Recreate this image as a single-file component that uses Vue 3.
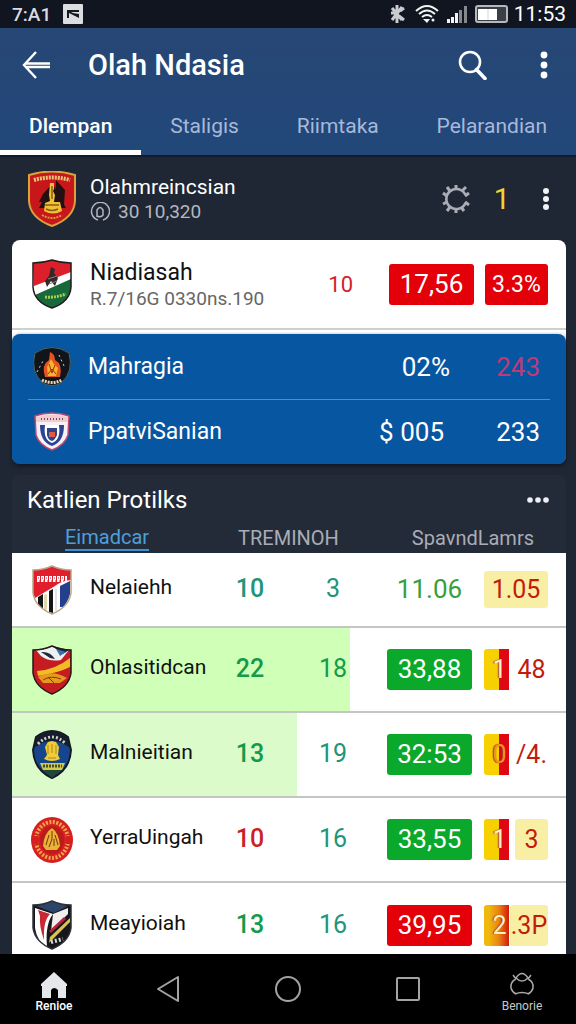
<template>
  <div class="screen">
    <div class="status">
      <span class="status-clock">7:A1</span>
      <svg class="status-pic" width="20" height="20" viewBox="0 0 20 20" aria-hidden="true">
        <rect width="20" height="20" rx="1" fill="#dcdde0" />
        <path d="M4 7h2l4 2 6 1v4l-6-3-4-2v5H4z" fill="#15181f" />
        <path d="M4 6h12v2H4z" fill="#15181f" />
      </svg>
      <svg width="18" height="20" viewBox="0 0 18 20" aria-hidden="true">
        <path d="M3 4l10 12M13 3L3 16M8 1v18M2 9h5M10 12l5 4M11 7l4-3" stroke="#c9cbd0" stroke-width="3" fill="none" />
      </svg>
      <svg width="24" height="20" viewBox="0 0 24 20" aria-hidden="true">
        <g fill="none" stroke="#f2f3f5" stroke-width="2">
          <path d="M1 7Q12-3 23 7M4 10q8-7 16 0M7 13q5-4 10 0" />
        </g>
        <path d="M8 15h7l-3 4z" fill="#f2f3f5" />
        <circle cx="18" cy="16" r="1.5" fill="#f2f3f5" />
      </svg>
      <svg width="20" height="20" viewBox="0 0 20 20" aria-hidden="true">
        <path d="M0 15h3v4H0zM4 13h3v6H4zM8 9h3v10H8z" fill="#f2f3f5" />
        <path d="M12 6h3v13h-3zM17 2h3v17h-3z" fill="#85898f" />
      </svg>
      <svg class="battery" width="33" height="18" viewBox="0 0 33 18" aria-hidden="true">
        <rect x="1" y="1" width="31" height="16" rx="2" fill="#3a3e46" stroke="#b6b8bc" stroke-width="2" />
        <path d="M3 4h19v11H3z" fill="#fff" />
        <path d="M13 4v11" stroke="#d5d5d5" />
      </svg>
      <span class="status-time">11:53</span>
    </div>

    <header class="header">
      <div class="toolbar">
        <button class="icon-btn" type="button" aria-label="Back">
          <svg width="30" height="28" viewBox="0 0 30 28">
            <path d="M14 1L2 14l12 13M3 12.500h25M3 16h25" fill="none" stroke="#fff" stroke-width="2.4" />
          </svg>
        </button>
        <h1>Olah Ndasia</h1>
        <button class="icon-btn search" type="button" aria-label="Search">
          <svg width="30" height="30" viewBox="0 0 30 30" fill="none" stroke="#fff">
            <circle cx="12" cy="12" r="10" stroke-width="2.6" />
            <path d="M18.500 19.500l8.500 9" stroke-width="3.600" stroke-linecap="round" />
          </svg>
        </button>
        <button class="icon-btn" type="button" aria-label="More">
          <svg width="8" height="28" viewBox="0 0 8 28" fill="#fff">
            <circle v-for="y in [4, 14, 24]" :key="y" cx="4" :cy="y" r="3.4" />
          </svg>
        </button>
      </div>
      <nav class="tabs">
        <button v-for="(tab, i) in tabs" :key="tab" type="button" :class="{ active: i === 0 }">{{ tab }}</button>
      </nav>
    </header>

    <main class="content">
      <section class="league">
        <svg class="crest-lg" width="48" height="56" viewBox="0 0 48 56" aria-hidden="true">
          <path d="M1 4q23-7 46 0v26q-1 17-23 25Q2 47 1 30z" fill="#c8171b" stroke="#d8a23c" stroke-width="2" />
          <path d="M24 12l14 25H11z" fill="#1b1213" />
          <path d="M28 9l9 10-1 15-9-5zM15 23l9-10-2 18H11z" fill="#241011" />
          <path d="M6 9q18-5 36 0" fill="none" stroke="#e9c376" stroke-width="4" stroke-dasharray="2 1" />
          <path d="M22 12h4v6l-1 2 2 4-1 7h6l2 9q-9 5-18 0l1-8 5-2-1-6z" fill="#edc234" />
          <path d="M17 34h14M24 15v13M18 38q6 3 12 0" stroke="#8d5b14" stroke-width="1.5" fill="none" />
          <path d="M14 44q10 6 20 0" fill="none" stroke="#d99a36" stroke-dasharray="2 1" stroke-width="2" />
        </svg>
        <div class="label">
          <h2>Olahmreincsian</h2>
          <p class="league-meta">
            <svg width="20" height="20" viewBox="0 0 20 20" fill="none" stroke="#b4b7bf" stroke-width="1.5" aria-hidden="true">
              <path d="M8 18A9 9 0 1 1 13 18M7 15V8q3-5 6 0v5q-2 3-6 1" />
            </svg>
            30 10,320
          </p>
        </div>
        <button class="icon-btn gear" type="button" aria-label="Settings">
          <svg width="28" height="30" viewBox="0 0 28 30" fill="none" stroke="#a9adb5">
            <path d="M23.500 11A10 10 0 1 0 23.500 19" stroke-width="2.600" />
            <path d="M14 5V1M20 7l4-4M23 12l4-3M23 18l4 3M19 23l3 4M14 25v4M8 23l-3 4M5 18l-4 2M5 12l-4-3M8 7L5 3" stroke-width="3" />
          </svg>
        </button>
        <span class="league-count">1</span>
        <button class="icon-btn" type="button" aria-label="League menu">
          <svg width="8" height="24" viewBox="0 0 8 24" fill="#f1f2f5">
            <circle v-for="y in [4, 12, 20]" :key="y" cx="4" :cy="y" r="3" />
          </svg>
        </button>
      </section>

      <section class="featured">
        <div class="lead">
          <svg class="crest" width="40" height="50" viewBox="0 0 40 50" aria-hidden="true">
            <path d="M1 4q10 0 19-3 9 3 19 3v24q-1 15-19 21Q2 43 1 28z" fill="#fff" />
            <path d="M1 4q10 0 19-3 9 3 19 3v9L2 27z" fill="#dc1f2b" />
            <path d="M3 36l36-16v8q-1 15-19 21Q7 45 3 36z" fill="#17683a" />
            <path d="M19 8l4 2-1 4 4 5-3 8-4-5-4 6-2-6 4-5z" fill="#302a2b" />
            <path d="M16 20l9-3M17 25l8-3" stroke="#8b7a75" />
            <path d="M13 38q10 1 21-3" stroke="#a8cf4e" stroke-width="3" stroke-dasharray="2 1" fill="none" />
            <path d="M1 4q10 0 19-3 9 3 19 3v24q-1 15-19 21Q2 43 1 28z" fill="none" stroke="#221a1c" stroke-width="1.5" />
          </svg>
          <div class="label">
            <h3>Niadiasah</h3>
            <p>R.7/16G 0330ns.190</p>
          </div>
          <span class="lead-num">10</span>
          <span class="pill red">17,56</span>
          <span class="pill red small">3.3%</span>
        </div>
        <div class="blue">
          <div class="blue-row">
            <svg class="crest" width="40" height="40" viewBox="0 0 40 40" aria-hidden="true">
              <path d="M3 6Q20-5 37 6q5 19-8 30-9 5-18 0Q-2 25 3 6z" fill="#11151b" stroke="#4d6357" />
              <path d="M18 5q5 2 5 8 8 4 5 17H13q-4-12 4-17z" fill="#e4541c" />
              <path d="M19 12l3 5 4 4-2 8h-8l-1-9z" fill="#f6b32d" />
              <path d="M17 17l3 9 3-8M16 27l4-5 4 5" stroke="#a42a16" fill="none" />
              <path d="M5 25l6-11M27 8l6 13" stroke="#ddd6bf" stroke-dasharray="2 3" />
              <path d="M10 33q10 5 20 0" fill="none" stroke="#e9d7b4" stroke-width="3" stroke-dasharray="2 1" />
            </svg>
            <span class="team">Mahragia</span>
            <span>02%</span>
            <span class="end pink">243</span>
          </div>
          <div class="blue-row">
            <svg class="crest" width="40" height="40" viewBox="0 0 40 40" aria-hidden="true">
              <path d="M3 4q17-6 34 0l-1 19q-3 10-16 15Q7 33 4 23z" fill="#f6f1f6" stroke="#c5476e" stroke-width="1.5" />
              <path d="M4 5q16-5 32 0v5H4z" fill="#f3cccf" />
              <path d="M9 7h22" stroke="#7c466d" stroke-width="2" stroke-dasharray="1 2" />
              <path d="M8 13h24q0 17-12 21Q8 30 8 13z" fill="#2b4396" />
              <path d="M13 13h14q2 15-7 18-9-3-7-18z" fill="#fff" />
              <path d="M15 16h10v7q-2 5-5 6-4-1-5-6z" fill="#304683" />
              <path d="M17 20h6v5h-6z" fill="#df5b45" />
            </svg>
            <span class="team">PpatviSanian</span>
            <span class="shifted">$ 005</span>
            <span class="end">233</span>
          </div>
        </div>
      </section>

      <section class="board">
        <div class="board-head">
          <h2>Katlien Protilks</h2>
          <button class="icon-btn" type="button" aria-label="Table options">
            <svg width="24" height="8" viewBox="0 0 24 8" fill="#eef0f5">
              <circle v-for="x in [4, 12, 20]" :key="x" :cx="x" cy="4" r="2.8" />
            </svg>
          </button>
        </div>
        <div class="board-tabs">
          <button type="button" class="active">Eimadcar</button>
          <button type="button">TREMINOH</button>
          <button type="button">SpavndLamrs</button>
        </div>
        <table>
          <colgroup>
            <col class="c-crest" />
            <col />
            <col class="c-one" />
            <col class="c-two" />
            <col class="c-pill" />
            <col class="c-odds" />
          </colgroup>
          <tbody>
            <tr v-for="row in rows" :key="row.name" :class="row.fill" :style="{ '--fill': row.width + '%' }">
              <td>
                <svg class="crest" width="40" height="50" viewBox="0 0 40 50" aria-hidden="true">
                  <g v-if="row.crest === 'stripes'">
                    <path :d="shield" fill="#fff" />
                    <path d="M1 5q10 0 19-4 9 4 19 4v10q-10 1-16 6L3 33 1 28z" fill="#e01e2c" />
                    <path d="M6 32l5-3v15l-5-5zM17 26l4-2v24l-4-1z" fill="#151618" />
                    <path d="M12 30l3-1v17l-3-1z" fill="#dfd8ae" />
                    <path d="M28 21l10-5v13q-2 8-7 13h-3z" fill="#22408d" />
                    <path d="M24 24v22" stroke="#c9cbd6" />
                    <path d="M5 14h30" stroke="#fff" stroke-width="6" stroke-dasharray="3 1" />
                    <path d="M6 13h27M7 16h27" stroke="#cf2832" stroke-dasharray="1 3" />
                    <path :d="shield" fill="none" stroke="#b7a687" stroke-width="1.5" />
                  </g>
                  <g v-else-if="row.crest === 'wave'">
                    <path :d="shield" fill="#c51c22" />
                    <path d="M4 5q9 0 16-4 9 4 17 4l-8 10q-12 2-20-4z" fill="#edf1f4" />
                    <path d="M9 7q9-1 14 7l-5-1zM20 1l17 4-6 4z" fill="#202a36" />
                    <path d="M24 4l10 3-6 4z" fill="#3d70ac" />
                    <path d="M5 26q18-1 33-13v9Q26 28 6 31z" fill="#f2bd24" />
                    <path d="M6 32q14-8 29 1l-7 5H11z" fill="#e49a1d" />
                    <path d="M11 35q8-5 18-1M16 32l6 6" stroke="#9c2a19" fill="none" />
                    <path :d="shield" fill="none" stroke="#26171a" stroke-width="1.500" />
                  </g>
                  <g v-else-if="row.crest === 'eagle'">
                    <path d="M4 7Q20-5 36 7l3 13q-1 20-19 28Q2 40 1 20z" fill="#17458c" stroke="#131a23" stroke-width="2" />
                    <path d="M4 7Q20-5 36 7l2 11Q20 4 2 18z" fill="#151e2a" />
                    <path d="M6 14Q20 0 34 14" fill="none" stroke="#cfd1cc" stroke-width="3" stroke-dasharray="2 2" />
                    <path d="M20 11l4 1 3 5-1 8 2 4q-8 4-16 0l3-4-2-8 3-5z" fill="#f0cc39" />
                    <path d="M16 15v9M20 14v9M24 15v9M16 28h8" stroke="#ae871c" />
                    <path d="M8 33h25l-3 7H11z" fill="#d5c94b" />
                    <path d="M11 36h19" stroke="#455123" stroke-width="3" stroke-dasharray="2 1" />
                    <path d="M11 40h18l-9 8z" fill="#1f4837" />
                  </g>
                  <g v-else-if="row.crest === 'round'">
                    <ellipse cx="20" cy="25" rx="21" ry="23" fill="#d4211f" />
                    <ellipse cx="20" cy="25" rx="16" ry="18" fill="none" stroke="#efa34c" stroke-width="4" stroke-dasharray="2 1.500" />
                    <ellipse cx="20" cy="25" rx="12" ry="14" fill="#bb1b1b" />
                    <path d="M20 13q7 5 8 18l-3 4H14l-3-4q1-13 9-18z" fill="#e9b436" />
                    <path d="M17 20l-3 10M23 20l3 10M20 16v8l-3 8M22 24v7" stroke="#743313" fill="none" />
                    <path d="M3 21v8M37 21v8" stroke="#d4211f" stroke-width="6" />
                  </g>
                  <g v-else>
                    <path :d="shield" fill="#15171b" />
                    <path d="M4 6q9-1 16-5 9 4 16 5L22 13z" fill="#2c4568" />
                    <path d="M3 8l18 6q-8 10-6 33Q5 42 3 28z" fill="#fff" />
                    <path d="M6 10l12 4q-7 7-6 26-5-14-4-24z" fill="#cb2634" />
                    <path d="M21 14l15-6v6L19 31z" fill="#f2eeee" />
                    <path d="M18 37l20-19v4L17 43z" fill="#dcc051" />
                    <path d="M18 32l15-14" stroke="#b9203a" stroke-width="3" />
                    <path d="M19 42l12-3" stroke="#d6d6d6" stroke-width="4" stroke-dasharray="2 2" />
                    <path :d="shield" fill="none" stroke="#303238" stroke-width="1.500" />
                  </g>
                </svg>
              </td>
              <td class="team">{{ row.name }}</td>
              <td class="num one" :class="row.tone">{{ row.one }}</td>
              <td class="num teal" :class="row.tone2">{{ row.two }}</td>
              <td class="rate"><span class="pill" :class="row.pill">{{ row.rate }}</span></td>
              <td>
                <div class="odds-box">
                  <span v-if="row.flag" class="flag" :class="row.flagTone">{{ row.flag }}</span>
                  <span class="odd" :class="row.oddTone">{{ row.odd }}</span>
                </div>
              </td>
            </tr>
          </tbody>
        </table>
      </section>
    </main>

    <nav class="bottom">
      <button type="button">
        <svg width="28" height="28" viewBox="0 0 28 28" fill="#e6e7ea" aria-hidden="true">
          <path d="M14 1l13 12v2h-1v12h-8v-8q-4-4-7 0v8H2V15H1v-2z" />
        </svg>
        <span class="strong">Renioe</span>
      </button>
      <button type="button" aria-label="Back">
        <svg width="26" height="30" viewBox="0 0 26 30" fill="none" stroke="#a3a3a3" stroke-width="2">
          <path d="M23 3v24L3 15z" stroke-linejoin="round" />
        </svg>
      </button>
      <button type="button" aria-label="Home">
        <svg width="28" height="28" viewBox="0 0 28 28" fill="none" stroke="#a3a3a3" stroke-width="2">
          <circle cx="14" cy="14" r="12" />
        </svg>
      </button>
      <button type="button" aria-label="Recent">
        <svg width="26" height="26" viewBox="0 0 26 26" fill="none" stroke="#a3a3a3" stroke-width="2">
          <rect x="2" y="2" width="22" height="22" rx="1" />
        </svg>
      </button>
      <button type="button">
        <svg width="28" height="28" viewBox="0 0 28 28" fill="none" stroke="#a9a9a9" stroke-width="1.500" aria-hidden="true">
          <path d="M8 7q6-9 12 0-6 6-12 0zM5 4l3 4M23 4l-3 4M8 8q-6 3-5 9 1 4 5 6M20 8q6 3 5 9-1 4-5 6M7 23q7-3 14 0" />
        </svg>
        <span>Benorie</span>
      </button>
    </nav>
  </div>
</template>

<script setup>
const tabs = ['Dlempan', 'Staligis', 'Riimtaka', 'Pelarandian']

const shield = 'M1 5q10 0 19-4 9 4 19 4v23q-2 14-19 21Q3 42 1 28z'

const rows = [
  { name: 'Nelaiehh', crest: 'stripes', one: '10', tone: 'teal', two: '3', pill: 'plain', rate: '11.06', odd: '1.05', oddTone: 'cream short' },
  { name: 'Ohlasitidcan', crest: 'wave', fill: 'fill', width: 61, one: '22', tone: 'green', two: '18', tone2: 'green', pill: 'lime', rate: '33,88', flag: '1', odd: '48' },
  { name: 'Malnieitian', crest: 'eagle', fill: 'fill pale', width: 51.5, one: '13', tone: 'green', two: '19', pill: 'lime', rate: '32:53', flag: '0', flagTone: 'ember', odd: '/4.' },
  { name: 'YerraUingah', crest: 'round', one: '10', tone: 'red', two: '16', pill: 'lime', rate: '33,55', flag: '1', odd: '3', oddTone: 'cream' },
  { name: 'Meayioiah', crest: 'slash', one: '13', tone: 'green', two: '16', pill: 'red', rate: '39,95', flag: '2', flagTone: 'blend', odd: '.3P', oddTone: 'cream joined' },
]
</script>

<style>
body {
  margin: 0;
  background: #1f2532;
}
</style>

<style scoped>
.screen {
  display: flex;
  flex-direction: column;
  height: 100vh;
  overflow: hidden;
  background: #202734;
  color: #fff;
  font-family: Roboto, 'Liberation Sans', sans-serif;
}

h1,
h2,
h3,
p {
  margin: 0;
  font-weight: 400;
}
svg {
  display: block;
  flex: none;
}
button {
  margin: 0;
  padding: 0;
  border: 0;
  background: none;
  color: inherit;
  font: inherit;
}

.status {
  display: flex;
  flex: none;
  align-items: center;
  gap: 8px;
  height: 28px;
  padding: 0 10px 0 12px;
  background: #10151f;
}
.status-clock {
  font-size: 19px;
  font-weight: 500;
  color: #d9dbe0;
}
.status-pic {
  margin-right: auto;
  margin-left: 4px;
}
.battery {
  margin-right: -2px;
}
.status-time {
  font-size: 21px;
}

.header {
  flex: none;
  background: linear-gradient(#274775, #22477a);
}
.toolbar {
  display: flex;
  align-items: center;
  height: 74px;
  padding: 0 28px 0 22px;
}
.toolbar h1 {
  flex: 1;
  margin-left: 36px;
  font-size: 29px;
  font-weight: 500;
}
.search {
  margin-right: 52px;
}
.tabs {
  display: flex;
  height: 53px;
}
.tabs button {
  flex: 1 1 auto;
  border-bottom: 5px solid transparent;
  color: #a6b9db;
  font-size: 21px;
}
.tabs .active {
  border-color: #fff;
  color: #fff;
  font-weight: 500;
}

.content {
  flex: 1;
  min-height: 0;
  overflow: hidden;
  padding: 0 10px 0 12px;
  border-top: 2px solid #131b29;
}

.league {
  display: flex;
  align-items: center;
  height: 83px;
  padding: 0 16px;
}
.label {
  flex: 1;
  margin-left: 14px;
}
.label h2 {
  font-size: 21px;
  line-height: 26px;
}
.label h3 {
  font-size: 23px;
  line-height: 29px;
}
.label p {
  font-size: 19px;
  line-height: 24px;
}
.label .league-meta {
  display: flex;
  align-items: center;
  gap: 8px;
  color: #b4b7bf;
}
.league-count {
  margin: 0 32px 0 24px;
  color: #ecd92e;
  font-size: 29px;
}

.featured {
  border-radius: 8px;
  background: #fff;
}
.crest {
  margin-left: 20px;
  overflow: visible;
}
.lead {
  display: flex;
  align-items: center;
  height: 88px;
  padding-right: 18px;
  border-bottom: 2px solid #cfcfcf;
  color: #111;
}
.lead .label {
  margin-left: 18px;
}
.lead p {
  color: #666;
}
.lead-num {
  margin-right: 36px;
  color: #d2222a;
  font-size: 22px;
}
.pill {
  display: inline-block;
  width: 85px;
  border-radius: 3px;
  font-size: 26px;
  line-height: 41px;
  text-align: center;
  color: #fff;
}
.pill.red {
  background: #e30008;
}
.pill.lime {
  background: #0aa82b;
}
.pill.plain {
  color: #36a03d;
}
.pill.small {
  width: 63px;
  margin-left: 11px;
  font-size: 23px;
}

.blue {
  margin-top: 4px;
  border-radius: 8px;
  background: #0656a2;
  box-shadow: 0 2px 4px #101722;
}
.blue-row {
  position: relative;
  display: flex;
  align-items: center;
  height: 65px;
  padding-right: 26px;
  font-size: 26px;
}
.blue-row + .blue-row::before {
  content: '';
  position: absolute;
  inset: 0 16px auto;
  border-top: 1px solid #538dc4;
}
.blue-row .team {
  flex: 1;
  margin-left: 16px;
  font-size: 23px;
}
.shifted {
  margin-right: 6px;
}
.end {
  width: 90px;
  text-align: right;
}
.pink {
  color: #bf3a79;
}

.board {
  margin-top: 11px;
  border-radius: 8px;
  background: #242b38;
}
.board-head {
  display: flex;
  align-items: center;
  justify-content: space-between;
  height: 50px;
  padding: 0 16px 0 15px;
}
.board-head h2 {
  font-size: 24px;
}
.board-tabs {
  display: flex;
  justify-content: space-between;
  height: 28px;
  padding: 0 32px 0 53px;
}
.board-tabs button {
  height: 26px;
  color: #a9adb5;
  font-size: 20px;
  line-height: 24px;
}
.board-tabs .active {
  margin-right: 16px;
  border-bottom: 2px solid #3b91d3;
  color: #4ba0dc;
}

table {
  width: 100%;
  border-collapse: collapse;
  table-layout: fixed;
  background: #fff;
  color: #111;
}
.c-crest {
  width: 78px;
}
.c-one {
  width: 68px;
}
.c-two {
  width: 98px;
}
.c-pill {
  width: 95px;
}
.c-odds {
  width: 89px;
}
tr {
  height: 85px;
}
tr:first-child {
  height: 74px;
}
tr + tr {
  border-top: 2px solid #c3c6c1;
}
td {
  padding: 0;
}
td.team {
  padding-bottom: 5px;
  font-size: 21px;
  white-space: nowrap;
}
.num {
  padding-bottom: 2px;
  text-align: center;
  font-size: 25px;
}
.rate {
  text-align: center;
}
.fill {
  background: linear-gradient(90deg, #d0ffb8 var(--fill), transparent var(--fill));
}
.pale {
  background: linear-gradient(90deg, #dcfbca var(--fill), transparent var(--fill));
}
.teal {
  color: #209579;
}
.green {
  color: #149a49;
}
td.red {
  color: #cc1f27;
}
.one {
  font-weight: 500;
}
.odds-box {
  display: flex;
  align-items: center;
  width: 64px;
  margin-left: 7px;
  font-size: 25px;
  line-height: 41px;
}
.flag {
  width: 25px;
  background: linear-gradient(90deg, #f6d000 60%, #df0712 60%);
  border-radius: 3px 0 0 3px;
  color: #fff0c8;
  text-align: center;
  text-indent: 6px;
  text-shadow: -1px 0 1px #a83206;
}
.ember {
  color: #f0912a;
}
.blend {
  background: linear-gradient(90deg, #efb80e 20%, #e98211 60%, #d21a0c);
}
.odd {
  flex: 1;
  margin-left: 6px;
  color: #c41a0c;
  text-align: center;
}
.cream {
  border-radius: 3px;
  background: #f8efa5;
}
.short {
  margin-left: 0;
  line-height: 37px;
}
.joined {
  margin-left: 1px;
}

.bottom {
  display: flex;
  flex: none;
  height: 70px;
  background: #000;
}
.bottom button {
  display: flex;
  flex: 10;
  flex-direction: column;
  align-items: center;
  justify-content: center;
  color: #c8c8c8;
  font-size: 12px;
  line-height: 14px;
}
.bottom button:first-child,
.bottom button:last-child {
  flex: 9;
  padding-top: 6px;
}
.strong {
  color: #fff;
  font-weight: 500;
}
</style>
